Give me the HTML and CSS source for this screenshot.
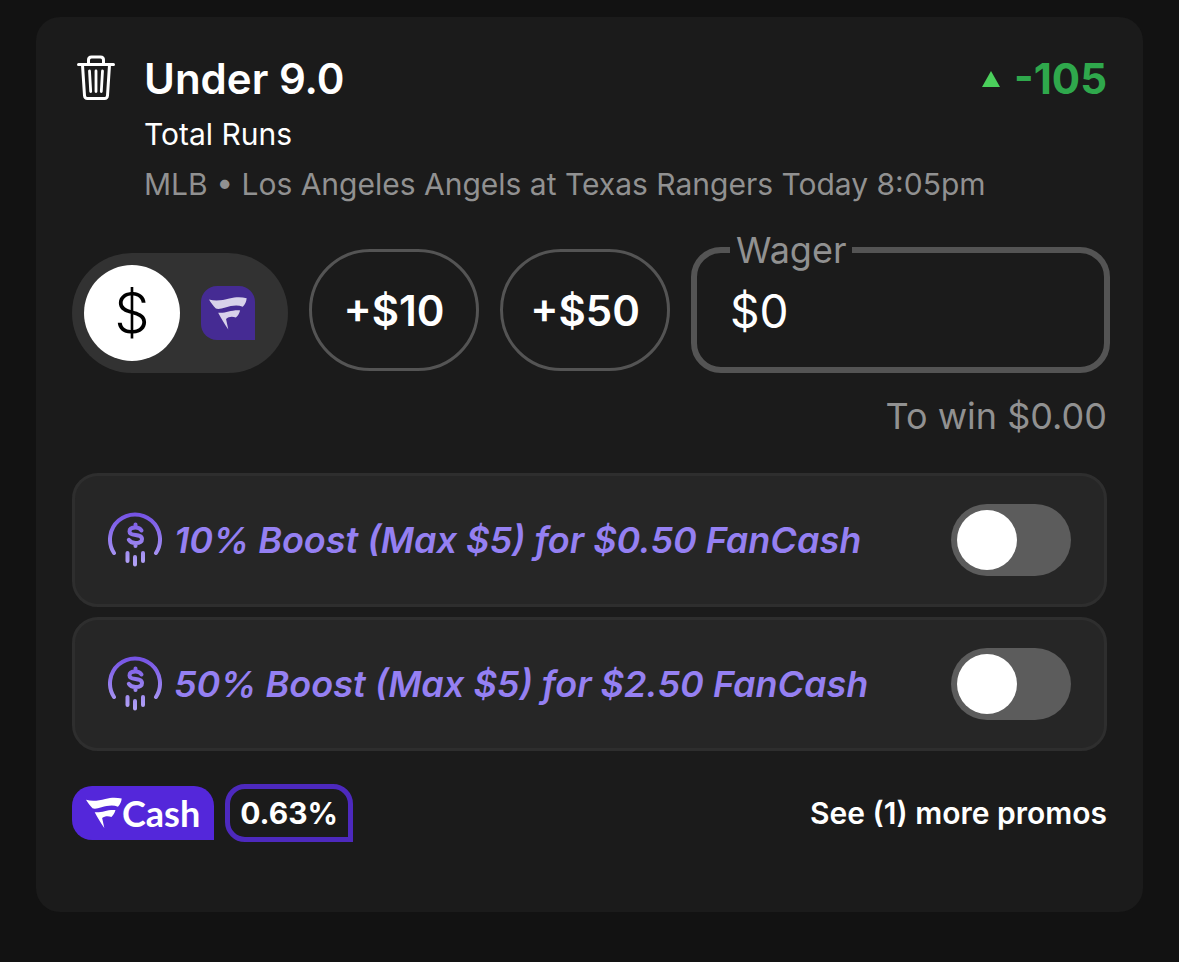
FILE: index.html
```
<!DOCTYPE html>
<html lang="en">
<head>
<meta charset="utf-8">
<meta name="viewport" content="width=device-width, initial-scale=1">
<title>Bet slip</title>
<link rel="stylesheet" href="styles.css">
</head>
<body>
<svg class="defs" width="0" height="0" aria-hidden="true">
  <defs>
    <linearGradient id="boost-fade" gradientUnits="userSpaceOnUse" x1="0" y1="0" x2="0" y2="54">
      <stop offset="0" stop-color="#7350e4"/>
      <stop offset="1" stop-color="#b3a4f6"/>
    </linearGradient>
    <symbol id="flag" viewBox="0 0 116 99">
      <path d="M0 7C22 13 42 9 62 4C82-1 98-1 115 3C114 14 110 23 103 29C86 22 68 26 50 31C38 35 27 37 21 34C13 27 6 17 0 7Z"/>
      <path d="M28 47C50 50 66 38 95 40C92 50 88 57 82 62C71 58 60 59 52 66L59 98C48 82 37 64 28 47Z"/>
    </symbol>
    <symbol id="boost" viewBox="0 0 54 56">
      <g fill="none" stroke="url(#boost-fade)" stroke-width="4" stroke-linecap="round" stroke-linejoin="round">
        <path d="M6 41A25 25 0 1 1 48 41"/>
        <path d="M33.500 18.500C32 16 30 15.500 27.500 15.500C24 15.500 21.500 16.800 21.500 19.400C21.500 25 34 21 34 27C34 30 31 31 27.500 31C24 31 22 30 20.800 27.800M27.500 12.500V15M27.500 31.500V34"/>
        <path d="M19.500 41V49M27 45V52.500M35 41V49"/>
      </g>
    </symbol>
  </defs>
</svg>

<main class="slip">
  <header class="bet">
    <button class="remove" type="button" aria-label="Remove bet">
      <svg width="38" height="46" viewBox="0 0 38 46" fill="none" stroke="currentColor" stroke-width="3" stroke-linecap="round" stroke-linejoin="round">
        <path d="M1.500 9.500H36.500M11.500 9V5Q11.500 2 14.500 2H23.500Q26.500 2 26.500 5V9M5.500 10L7.500 40.500Q7.700 43.500 10.500 43.500H27.500Q30.300 43.500 30.500 40.500L32.500 10"/>
        <path stroke-width="2.800" d="M12.500 16L13.700 36.500M19 16V36.500M25.500 16L24.300 36.500"/>
      </svg>
    </button>
    <div class="bet-info">
      <div class="bet-head">
        <h1 class="bet-title">Under 9.0</h1>
        <div class="odds">
          <svg width="18" height="16" viewBox="0 0 18 16" aria-hidden="true"><path d="M9 0L18 16H0Z" fill="#4bd05c"/></svg>
          <span>-105</span>
        </div>
      </div>
      <p class="bet-market">Total Runs</p>
      <p class="bet-event">MLB • Los Angeles Angels at Texas Rangers Today 8:05pm</p>
    </div>
  </header>

  <div class="stake">
    <div class="currency" role="radiogroup" aria-label="Currency">
      <label class="currency-option">
        <input type="radio" name="currency" aria-label="Dollars" checked>
        <span class="dollar">$</span>
      </label>
      <label class="currency-option">
        <input type="radio" name="currency" aria-label="FanCash">
        <span class="fan-tile"><svg width="38" height="33"><use href="#flag"/></svg></span>
      </label>
    </div>
    <button class="quick" type="button">+$10</button>
    <button class="quick" type="button">+$50</button>
    <fieldset class="wager">
      <legend><label for="wager">Wager</label></legend>
      <input id="wager" type="text" inputmode="decimal" value="$0">
    </fieldset>
  </div>
  <p class="to-win">To win $0.00</p>

  <div class="boosts">
    <label class="boost">
      <svg class="boost-icon" width="54" height="56" aria-hidden="true"><use href="#boost"/></svg>
      <span class="boost-text">10% Boost (Max $5) for $0.50 FanCash</span>
      <input class="switch" type="checkbox" role="switch">
    </label>
    <label class="boost">
      <svg class="boost-icon" width="54" height="56" aria-hidden="true"><use href="#boost"/></svg>
      <span class="boost-text">50% Boost (Max $5) for $2.50 FanCash</span>
      <input class="switch" type="checkbox" role="switch">
    </label>
  </div>

  <footer class="rewards">
    <span class="cash"><svg width="36" height="32" aria-hidden="true"><use href="#flag"/></svg>Cash</span>
    <span class="rate">0.63%</span>
    <a class="more" href="#promos">See (1) more promos</a>
  </footer>
</main>
</body>
</html>
```
FILE: styles.css
```
* {
  box-sizing: border-box;
}

body {
  margin: 0;
  padding: 17px 36px 50px;
  background: #121212;
  color: #fff;
  font-family: Inter, "Liberation Sans", sans-serif;
}

h1,
p {
  margin: 0;
}

button,
input {
  font: inherit;
  color: inherit;
}

.defs {
  position: absolute;
}

.slip {
  padding: 36px 36px 70px;
  border-radius: 24px;
  background: #1b1b1b;
}

.bet {
  display: flex;
  align-items: flex-start;
}

.remove {
  display: flex;
  flex: none;
  justify-content: center;
  width: 48px;
  margin-right: 24px;
  padding: 2px 0;
  border: 0;
  background: none;
}

.bet-info {
  flex: 1;
}

.bet-head {
  display: flex;
  justify-content: space-between;
  margin-bottom: 4px;
}

.bet-title,
.odds {
  font-size: 42px;
  font-weight: 600;
  line-height: 52px;
}

.odds {
  display: flex;
  align-items: center;
  gap: 14px;
  color: #2fa84c;
  font-weight: 700;
}

.bet-market,
.bet-event {
  font-size: 30px;
  line-height: 50px;
}

.bet-event,
.to-win,
.wager legend {
  color: #919191;
}

.stake {
  display: flex;
  align-items: flex-end;
  gap: 21px;
  margin: 19px -3px 0 0;
}

.currency {
  display: flex;
  flex: none;
  height: 120px;
  padding: 12px;
  border-radius: 60px;
  background: #323232;
}

.currency-option {
  display: flex;
  align-items: center;
  justify-content: center;
  width: 96px;
  height: 96px;
  border-radius: 50%;
}

.currency-option:has(:checked) {
  background: #fff;
  color: #000;
}

.currency-option input {
  position: absolute;
  opacity: 0;
}

.dollar {
  font-size: 56px;
  font-weight: 300;
  line-height: 64px;
}

.fan-tile {
  display: flex;
  align-items: center;
  justify-content: center;
  width: 54px;
  height: 54px;
  border-radius: 16px 16px 0 16px;
  background: #452b93;
  fill: #d8d2ea;
}

.quick {
  flex: none;
  width: 170px;
  height: 122px;
  margin-bottom: 2px;
  padding: 0;
  border: 3px solid #545454;
  border-radius: 61px;
  background: none;
  font-size: 42px;
  font-weight: 600;
}

.wager {
  flex: 1;
  min-width: 0;
  margin: 0;
  padding: 0 33px 17px;
  border: 6px solid #545454;
  border-radius: 30px;
}

.wager legend {
  padding: 0 6px;
  font-size: 36px;
  line-height: 44px;
}

.wager input {
  display: block;
  width: 100%;
  height: 78px;
  padding: 0;
  border: 0;
  outline: 0;
  background: none;
  font-size: 46px;
}

.to-win {
  margin-top: 21px;
  font-size: 36px;
  line-height: 44px;
  text-align: right;
}

.boosts {
  display: grid;
  gap: 10px;
  margin-top: 35px;
}

.boost {
  display: flex;
  align-items: center;
  gap: 12px;
  height: 134px;
  padding: 0 33px;
  border: 3px solid #2e2e2e;
  border-radius: 26px;
  background: #262626;
}

.boost-icon {
  flex: none;
}

.boost-text {
  flex: 1;
  color: #9580f2;
  font-size: 36px;
  font-style: italic;
  font-weight: 600;
}

.switch {
  flex: none;
  width: 120px;
  height: 72px;
  margin: 0;
  padding: 6px;
  border-radius: 36px;
  background: #5c5c5c;
  appearance: none;
}

.switch::before {
  content: "";
  display: block;
  width: 60px;
  height: 60px;
  border-radius: 50%;
  background: #fff;
}

.switch:checked::before {
  margin-left: auto;
}

.rewards {
  display: flex;
  align-items: center;
  gap: 11px;
  margin-top: 33px;
}

.cash {
  display: flex;
  align-items: center;
  height: 54px;
  padding: 0 14px;
  border-radius: 20px 20px 0 20px;
  background: #5427da;
  fill: #fff;
  font-family: Lato, sans-serif;
  font-size: 36px;
  font-weight: 700;
}

.rate {
  padding: 0 10px;
  border: 5px solid #4d29be;
  border-radius: 20px 20px 0 20px;
  font-size: 30px;
  font-weight: 700;
  line-height: 48px;
}

.more {
  margin-left: auto;
  color: #fff;
  font-size: 30px;
  font-weight: 600;
  text-decoration: none;
}
```
